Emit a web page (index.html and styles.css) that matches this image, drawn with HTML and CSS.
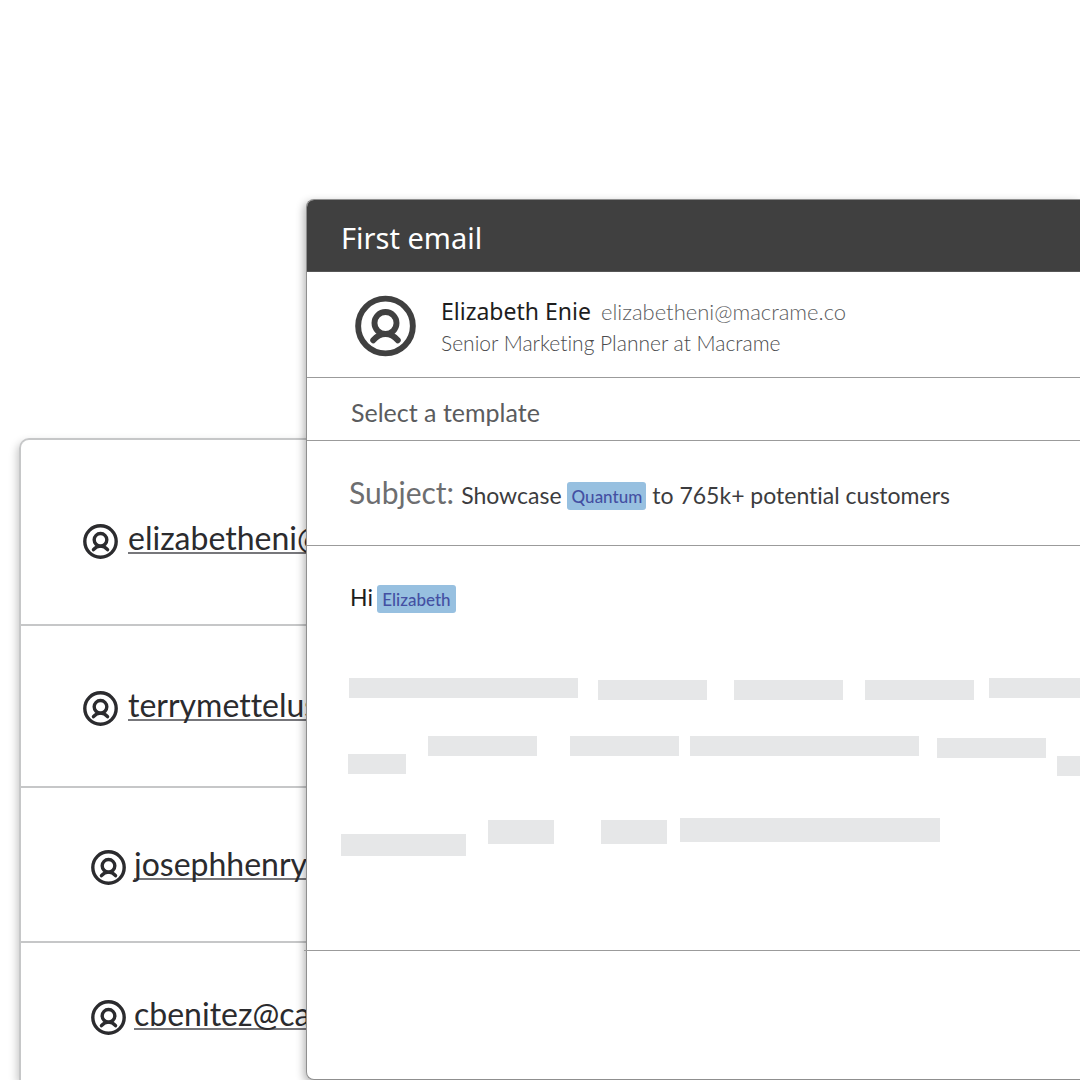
FILE: index.html
```html
<!DOCTYPE html>
<html lang="en">
<head>
<meta charset="utf-8">
<meta name="viewport" content="width=device-width, initial-scale=1">
<title>First email</title>
<link rel="stylesheet" href="styles.css">
</head>
<body>
<svg class="sprite" aria-hidden="true">
  <symbol id="person" viewBox="0 0 62 62">
    <circle cx="31" cy="31" r="27.8"/>
    <circle cx="31" cy="28" r="11.2"/>
    <path d="M18.5 45.5Q24 39.2 31 39.2T43.5 45.5"/>
  </symbol>
</svg>
<main class="stage">
  <ul class="contacts">
    <li class="contact"><svg class="avatar-small" aria-hidden="true"><use href="#person"/></svg><a class="contact-link" href="#">elizabetheni@</a></li>
    <li class="contact"><svg class="avatar-small" aria-hidden="true"><use href="#person"/></svg><a class="contact-link" href="#">terrymettelus</a></li>
    <li class="contact contact-inset"><svg class="avatar-small" aria-hidden="true"><use href="#person"/></svg><a class="contact-link" href="#">josephhenry</a></li>
    <li class="contact contact-inset"><svg class="avatar-small" aria-hidden="true"><use href="#person"/></svg><a class="contact-link" href="#">cbenitez@ca</a></li>
  </ul>
  <article class="email">
    <header class="email-header"><h1 class="email-title">First email</h1></header>
    <section class="recipient">
      <svg class="avatar-large" aria-hidden="true"><use href="#person"/></svg>
      <div class="recipient-text">
        <div class="recipient-line"><h2 class="recipient-name">Elizabeth Enie</h2><span class="recipient-email">elizabetheni@macrame.co</span></div>
        <p class="recipient-role">Senior Marketing Planner at Macrame</p>
      </div>
    </section>
    <section class="template">
      <select class="template-select" aria-label="Template"><option>Select a template</option></select>
    </section>
    <section class="subject">
      <span class="subject-label">Subject:</span>
      <p class="subject-text">Showcase <span class="token">Quantum</span> to 765k+ potential customers</p>
    </section>
    <section class="message">
      <p class="greeting">Hi <span class="token">Elizabeth</span></p>
      <div class="skeleton" aria-hidden="true">
        <div class="line line-one"><i class="bar wide"></i><i class="bar medium low"></i><i class="bar medium low"></i><i class="bar medium low"></i><i class="bar wide"></i></div>
        <div class="line line-two"><i class="bar short"></i><i class="bar medium"></i><i class="bar medium"></i><i class="bar wide"></i><i class="bar medium low"></i><i class="bar short"></i></div>
        <div class="line line-three"><i class="bar long"></i><i class="bar brief"></i><i class="bar brief"></i><i class="bar widest"></i></div>
      </div>
    </section>
    <footer class="email-footer"></footer>
  </article>
</main>
</body>
</html>
```

FILE: styles.css
```css
* { box-sizing: border-box; }
body {
  margin: 0;
  background: #fff;
  font-family: Lato, "Open Sans", sans-serif;
  font-variant-ligatures: none;
  color: #3c3c3e;
}
h1, h2, p, ul { margin: 0; padding: 0; font-weight: 400; }
.sprite { position: absolute; width: 0; height: 0; }
.sprite symbol { fill: none; stroke: currentColor; stroke-width: 6; stroke-linecap: round; }

/* The email window overlaps the contact list */
.stage {
  display: grid;
  grid-template-columns: minmax(0, 1fr);
  min-height: 100vh;
  overflow: hidden;
}
.contacts, .email { grid-area: 1 / 1; }

.contacts {
  margin: 438px 0 0 19px;
  list-style: none;
  border: 2px solid #c6c7c8;
  border-width: 2px 0 0 2px;
  border-radius: 10px 0 0 0;
  box-shadow: -2px 4px 8px rgba(0, 0, 0, .22);
}
.contact {
  display: flex;
  align-items: flex-start;
  gap: 10px;
  height: 162px;
  padding: 65px 0 0 62px;
  border-bottom: 2px solid #c6c7c8;
  color: #2b2b2e;
}
.contact:first-child { height: 186px; padding-top: 84px; }
.contact:nth-child(3) { height: 155px; padding-top: 62px; }
.contact:last-child { height: 136px; padding-top: 57px; border: 0; }
.contact-inset { gap: 8px; padding-left: 70px; }
.avatar-small { width: 35px; height: 35px; flex: none; }
.contact-link {
  width: 300px;
  height: 30px;
  line-height: 28px;
  font-size: 32px;
  color: inherit;
  text-decoration: none;
  border-bottom: 2px solid #77777b;
}

.email {
  display: flex;
  flex-direction: column;
  margin: 199px 0 0 306px;
  background: #fff;
  border: 1px solid #8f8f8f;
  border-right: 0;
  border-radius: 8px 0 0 8px;
  box-shadow: -2px 3px 8px rgba(0, 0, 0, .3);
}
.email-header {
  padding: 19px 34px 14px;
  background: #404040;
  border-bottom: 1px solid #565656;
  border-radius: 7px 0 0 0;
}
.email-title {
  font: 400 29px/38px "Noto Sans", sans-serif;
  color: #fff;
}
.recipient {
  display: flex;
  gap: 25px;
  padding: 23px 48px 19px;
  border-bottom: 1px solid #9b9b9b;
}
.avatar-large { width: 61px; height: 62px; flex: none; color: #404040; }
.recipient-line { display: flex; align-items: baseline; gap: 10px; }
.recipient-name { font: 400 23px/32px "Noto Sans", sans-serif; color: #1d1d1d; }
.recipient-email { font-size: 22px; line-height: 32px; font-weight: 300; color: #5b5c5e; }
.recipient-role { font-size: 21px; line-height: 30px; font-weight: 300; color: #4b4c4e; }
.template { padding: 18px 44px 12px; border-bottom: 1px solid #9b9b9b; }
.template-select {
  appearance: none;
  display: block;
  width: 100%;
  height: 32px;
  padding: 0;
  border: 0;
  background: none;
  font: 400 25px/32px Lato, sans-serif;
  color: #5b5c5e;
}
.subject {
  display: flex;
  align-items: baseline;
  gap: 7px;
  padding: 32px 42px 33px;
  border-bottom: 1px solid #9b9b9b;
  white-space: nowrap;
}
.subject-label { font-size: 30px; line-height: 38px; color: #6d6e70; }
.subject-text { font-size: 23px; line-height: 34px; }
.token {
  display: inline-block;
  width: 79px;
  height: 28px;
  border-radius: 3px;
  background: #97c0e0;
  color: #4450a3;
  font-size: 17px;
  line-height: 30px;
  font-weight: 500;
  text-align: center;
  vertical-align: 1px;
}
.message { padding: 34px 0 94px; overflow: hidden; }
.greeting {
  display: flex;
  align-items: baseline;
  gap: 4px;
  padding-left: 43px;
  font-size: 23px;
  line-height: 34px;
  color: #1d1d1d;
}

.skeleton { padding: 64px 0 0 34px; }
.line { display: flex; align-items: flex-start; }
.bar { flex: none; height: 20px; background: #e6e7e8; }
.wide { width: 229px; }
.medium { width: 109px; }
.short { width: 58px; margin-top: 18px; }
.long { width: 125px; height: 22px; margin-top: 16px; }
.brief { width: 66px; height: 24px; margin-top: 2px; }
.widest { width: 260px; height: 24px; }
.low { margin-top: 2px; }

/* Word-like uneven gaps between the bars */
.bar + .bar { margin-left: 22px; }
.line-one { padding-left: 8px; }
.line-one .bar:nth-child(2) { margin-left: 20px; }
.line-one .bar:nth-child(3) { margin-left: 27px; }
.line-one .bar:nth-child(5) { margin-left: 15px; }
.line-two { padding: 36px 0 0 7px; }
.line-two .bar:nth-child(3) { margin-left: 33px; }
.line-two .bar:nth-child(4) { margin-left: 11px; }
.line-two .bar:nth-child(5) { margin-left: 18px; }
.line-two .bar:nth-child(6) { margin: 20px 0 0 11px; }
.line-three { padding-top: 42px; }
.line-three .bar:nth-child(3) { margin-left: 47px; }
.line-three .bar:nth-child(4) { margin-left: 13px; }

.email-footer {
  flex: 1;
  min-height: 128px;
  margin-left: -3px;
  border-top: 1px solid #9b9b9b;
}
```
